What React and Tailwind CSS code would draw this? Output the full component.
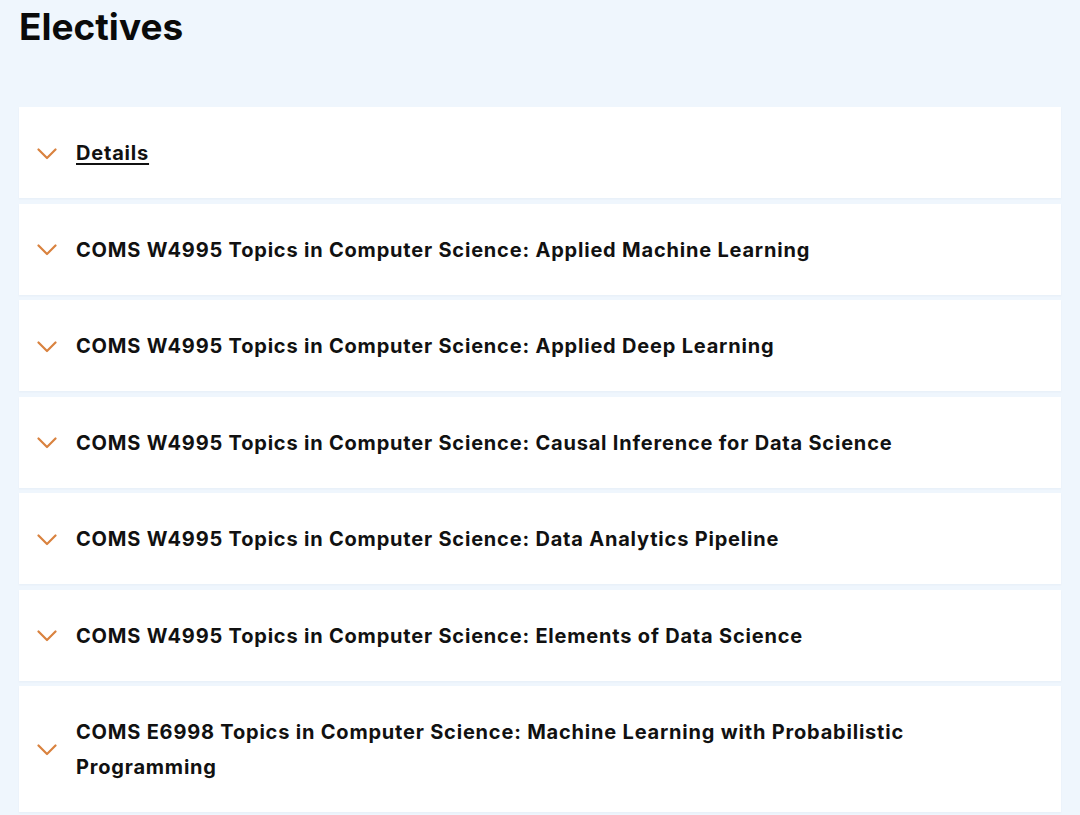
const courses = [
  'COMS W4995 Topics in Computer Science: Applied Machine Learning',
  'COMS W4995 Topics in Computer Science: Applied Deep Learning',
  'COMS W4995 Topics in Computer Science: Causal Inference for Data Science',
  'COMS W4995 Topics in Computer Science: Data Analytics Pipeline',
  'COMS W4995 Topics in Computer Science: Elements of Data Science',
  'COMS E6998 Topics in Computer Science: Machine Learning with Probabilistic Programming',
]

function Chevron() {
  return (
    <svg width="20" height="12" viewBox="0 0 20 12" fill="none" className="shrink-0">
      <path d="M1.5 1.5 L10 10 L18.5 1.5" stroke="#d9823f" strokeWidth="2.2" strokeLinecap="round" strokeLinejoin="round" />
    </svg>
  )
}

function Row({ children }) {
  return (
    <div className="flex items-center bg-white pt-[29px] pb-[27px] pl-[18px] pr-[100px] shadow-[0_1px_2px_rgba(30,60,110,0.04)]">
      <Chevron />
      <div className="ml-[19px] text-[20px] font-bold leading-[35px] tracking-[0.8px] text-[#111]">{children}</div>
    </div>
  )
}

export default function App() {
  return (
    <div
      className="min-h-screen bg-[#eff6fd] pl-[19px] pr-[19px]"
      style={{ fontFamily: 'Inter, "Noto Sans", sans-serif' }}
    >
      <h1 className="pt-[3px] text-[37px] font-bold leading-[48px] text-[#0a0a0a]">Electives</h1>
      <div className="mt-[56px] flex flex-col gap-[5.5px]">
        <Row>
          <span className="underline decoration-2 underline-offset-[3px]">Details</span>
        </Row>
        {courses.map((c) => (
          <Row key={c}>{c}</Row>
        ))}
      </div>
    </div>
  )
}
